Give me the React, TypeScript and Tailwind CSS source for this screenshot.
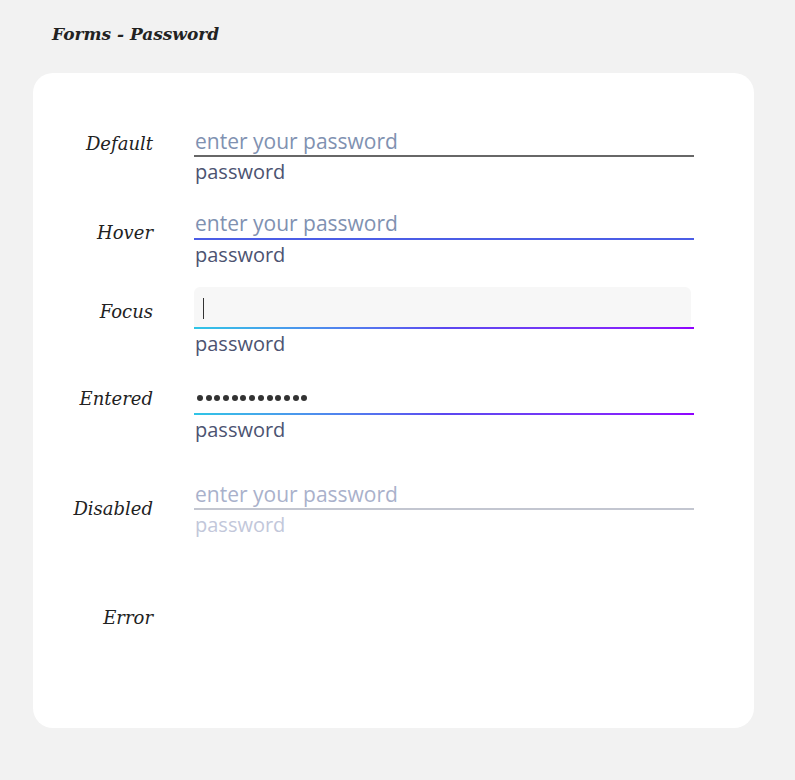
import React from "react";

const serif = { fontFamily: '"DejaVu Serif", "Liberation Serif", serif' };
const sans = { fontFamily: '"Open Sans", "Noto Sans", sans-serif' };

function Label({ text, top }: { text: string; top: string }) {
  return (
    <div
      className={`w-[120px] shrink-0 text-right italic text-[18px] leading-[24px] text-[#222] ${top}`}
      style={serif}
    >
      {text}
    </div>
  );
}

function Helper({ disabled }: { disabled?: boolean }) {
  return (
    <div
      className={`mt-[3px] pl-px text-[20px] leading-[24px] font-normal ${disabled ? "text-[#c2c7da]" : "text-[#4c5371]"}`}
      style={sans}
    >
      password
    </div>
  );
}

function Placeholder({ disabled }: { disabled?: boolean }) {
  return (
    <span
      className={`text-[21px] leading-[28px] font-normal ${disabled ? "text-[#a9b1cb]" : "text-[#8091b1]"}`}
      style={sans}
    >
      enter your password
    </span>
  );
}

export default function App() {
  return (
    <div className="min-h-[780px] w-[795px] bg-[#f2f2f2] pt-[20px] pl-[33px]">
      <div
        className="pl-[19px] text-[17px] leading-[28px] font-bold italic text-[#222]"
        style={serif}
      >
        Forms - Password
      </div>
      <div className="mt-[25px] w-[721px] h-[655px] rounded-[20px] bg-white pt-[42px]">
        {/* Default */}
        <div className="flex">
          <Label text="Default" top="mt-[17px]" />
          <div className="ml-[41px] w-[500px]">
            <div className="h-[42px] flex items-end pb-0 pl-px border-b-2 border-[#676767]">
              <Placeholder />
            </div>
            <Helper />
          </div>
        </div>
        {/* Hover */}
        <div className="flex mt-[14px]">
          <Label text="Hover" top="mt-[23px]" />
          <div className="ml-[41px] w-[500px]">
            <div className="h-[42px] flex items-end pb-px pl-px border-b-2 border-[#4b5de6]">
              <Placeholder />
            </div>
            <Helper />
          </div>
        </div>
        {/* Focus */}
        <div className="flex mt-[20px]">
          <Label text="Focus" top="mt-[13px]" />
          <div className="ml-[41px] w-[500px]">
            <div className="h-[40px] w-[497px] rounded-t-[6px] bg-[#f7f7f7] flex items-center pl-[9px]">
              <div className="w-px h-[21px] bg-[#333] mt-[2px]" />
            </div>
            <div className="h-[2px] bg-gradient-to-r from-[#2ec5e6] via-[#5b48f0] to-[#9000ff]" />
            <Helper />
          </div>
        </div>
        {/* Entered */}
        <div className="flex mt-[17px]">
          <Label text="Entered" top="mt-[14px]" />
          <div className="ml-[41px] w-[500px]">
            <div className="h-[40px] flex items-end pb-[12px] pl-[3px] gap-[2.7px]">
              {Array.from({ length: 13 }).map((_, i) => (
                <span key={i} className="block w-[6px] h-[6px] rounded-full bg-[#333]" />
              ))}
            </div>
            <div className="h-[2px] bg-gradient-to-r from-[#2ec5e6] via-[#5b48f0] to-[#9000ff]" />
            <Helper />
          </div>
        </div>
        {/* Disabled */}
        <div className="flex mt-[26px]">
          <Label text="Disabled" top="mt-[29px]" />
          <div className="ml-[41px] w-[500px]">
            <div className="h-[42px] flex items-end pb-0 pl-px border-b-2 border-[#c3c6d0]">
              <Placeholder disabled />
            </div>
            <Helper disabled />
          </div>
        </div>
        {/* Error */}
        <div className="flex mt-[69px]">
          <Label text="Error" top="mt-0" />
        </div>
      </div>
    </div>
  );
}
